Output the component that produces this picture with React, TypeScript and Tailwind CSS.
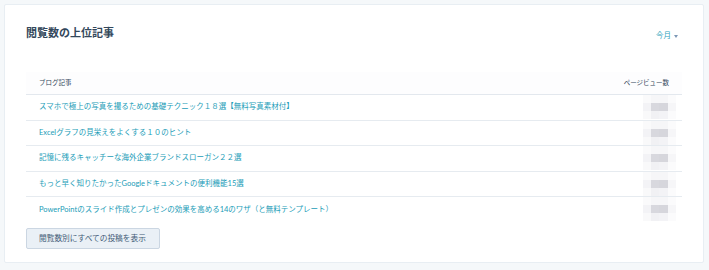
const posts = [
  'スマホで極上の写真を撮るための基礎テクニック１８選【無料写真素材付】',
  'Excelグラフの見栄えをよくする１０のヒント',
  '記憶に残るキャッチーな海外企業ブランドスローガン２２選',
  'もっと早く知りたかったGoogleドキュメントの便利機能15選',
  'PowerPointのスライド作成とプレゼンの効果を高める14のワザ（と無料テンプレート）',
];

// blurred page view count
const Mosaic = () => (
  <div className="grid grid-cols-[8px_8px_9px_8px] grid-rows-[8px_8px_8px]">
    <div className="bg-[#fafafb]" />
    <div className="bg-[#f6f6f8]" />
    <div className="bg-[#f6f6f8]" />
    <div className="bg-[#fbfbfc]" />
    <div className="bg-[#f3f3f6]" />
    <div className="bg-[#d8d8de]" />
    <div className="bg-[#d6d6dc]" />
    <div className="bg-[#f6f6f8]" />
    <div className="bg-[#f9f9fa]" />
    <div className="bg-[#f1f1f4]" />
    <div className="bg-[#f3f3f6]" />
    <div className="bg-[#fbfbfc]" />
  </div>
);

export default function App() {
  return (
    <div className="w-[709px] h-[270px] bg-[#f5f8fa] p-[4px] font-['Lato','Noto_Sans_CJK_JP',sans-serif]">
      <div className="h-[259px] w-[700px] bg-white border border-[#e8eef3] rounded-[2px] pl-[21px] pr-[21px] pt-[21px]">
        <div className="flex justify-between items-start">
          <h2 className="text-[11px] leading-[14px] font-semibold text-[#33475b]">閲覧数の上位記事</h2>
          <div className="flex items-center gap-[3px] mt-[5px] mr-[4px] text-[7.5px] leading-[10px] text-[#2ea3bd]">
            今月
            <span className="w-0 h-0 border-l-[2.5px] border-r-[2.5px] border-t-[3px] border-l-transparent border-r-transparent border-t-[#7c98b6]" />
          </div>
        </div>

        <div className="mt-[31px] w-[656px]">
          <div className="flex items-center justify-between h-[23px] px-[13px] bg-[#fdfdfe] border-b border-[#e3e8ee] text-[6.5px] text-[#33475b]">
            <span>ブログ記事</span>
            <span>ページビュー数</span>
          </div>
          {posts.map((title, i) => (
            <div
              key={i}
              className={`relative flex items-center h-[25.5px] pl-[13px] ${i < posts.length - 1 ? 'border-b border-[#e6ebf0]' : ''}`}
            >
              <span className="text-[7.5px] leading-[10px] text-[#1a9cb7]">{title}</span>
              <div className="absolute right-[6px] top-[0px]">
                <Mosaic />
              </div>
            </div>
          ))}
        </div>

        <button className="mt-[1px] h-[21px] w-[134px] bg-[#eaf0f6] border border-[#cbd6e2] rounded-[2px] pl-[12px] text-left text-[7.7px] text-[#425b76]">
          閲覧数別にすべての投稿を表示
        </button>
      </div>
    </div>
  );
}
